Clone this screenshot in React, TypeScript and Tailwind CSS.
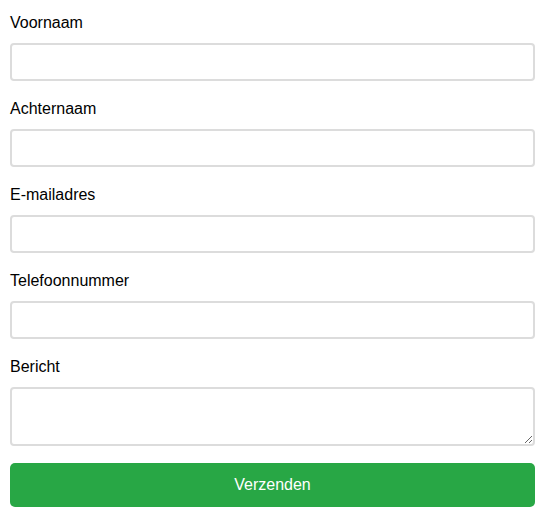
const fields = [
  { id: 'voornaam', label: 'Voornaam', type: 'text' },
  { id: 'achternaam', label: 'Achternaam', type: 'text' },
  { id: 'email', label: 'E-mailadres', type: 'email' },
  { id: 'telefoon', label: 'Telefoonnummer', type: 'tel' },
];

export default function App() {
  return (
    <div className="bg-white pl-[10px] pr-[12px] pt-[12px] font-['Liberation_Sans',Arial,sans-serif] text-black">
      <form className="flex flex-col" onSubmit={(e) => e.preventDefault()}>
        {fields.map((f) => (
          <div key={f.id} className="mb-[17px]">
            <label htmlFor={f.id} className="block text-base leading-[18px] mt-[2px] mb-[11px]">
              {f.label}
            </label>
            <input
              id={f.id}
              type={f.type}
              className="block w-full h-[38px] px-2 border-2 border-[#dcdcdc] rounded-[4px] bg-white outline-none"
            />
          </div>
        ))}
        <div className="mb-[17px]">
          <label htmlFor="bericht" className="block text-base leading-[18px] mt-[2px] mb-[11px]">
            Bericht
          </label>
          <textarea
            id="bericht"
            className="block w-full h-[59px] px-2 py-1 border-2 border-[#dcdcdc] rounded-[4px] bg-white outline-none"
          />
        </div>
        <button
          type="submit"
          className="w-full h-[44px] rounded-[5px] bg-[#28a745] text-white text-base"
        >
          Verzenden
        </button>
      </form>
    </div>
  );
}
